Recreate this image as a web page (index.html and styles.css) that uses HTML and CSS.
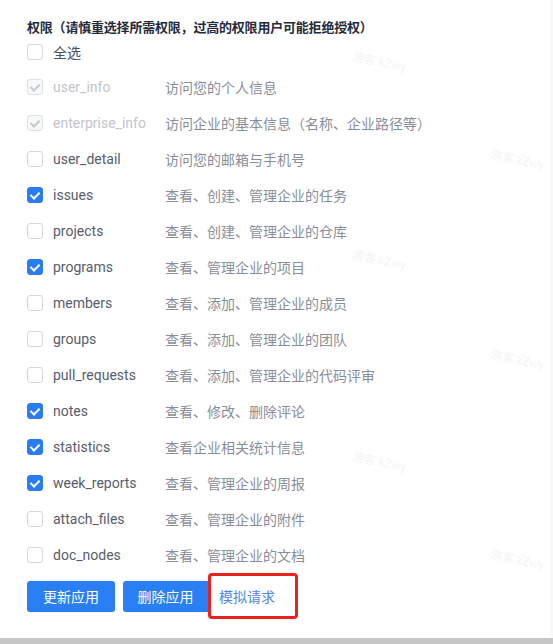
FILE: index.html
```html
<!DOCTYPE html>
<html lang="zh-CN">
<head>
    <meta charset="UTF-8">
    <meta name="viewport" content="width=device-width, initial-scale=1.0">
    <title>应用权限</title>
    <link rel="stylesheet" href="styles.css">
</head>
<body>
    <div class="page">
        <div class="scope-form">
            <div class="scope-title">权限（请慎重选择所需权限，过高的权限用户可能拒绝授权）</div>

            <label class="check-all">
                <span class="box"></span>
                <span class="name">全选</span>
            </label>

            <ul class="scope-list">
                <li class="scope disabled checked"><span class="box"></span><span class="name">user_info</span><span class="desc">访问您的个人信息</span></li>
                <li class="scope disabled checked"><span class="box"></span><span class="name">enterprise_info</span><span class="desc">访问企业的基本信息（名称、企业路径等）</span></li>
                <li class="scope"><span class="box"></span><span class="name">user_detail</span><span class="desc">访问您的邮箱与手机号</span></li>
                <li class="scope checked"><span class="box"></span><span class="name">issues</span><span class="desc">查看、创建、管理企业的任务</span></li>
                <li class="scope"><span class="box"></span><span class="name">projects</span><span class="desc">查看、创建、管理企业的仓库</span></li>
                <li class="scope checked"><span class="box"></span><span class="name">programs</span><span class="desc">查看、管理企业的项目</span></li>
                <li class="scope"><span class="box"></span><span class="name">members</span><span class="desc">查看、添加、管理企业的成员</span></li>
                <li class="scope"><span class="box"></span><span class="name">groups</span><span class="desc">查看、添加、管理企业的团队</span></li>
                <li class="scope"><span class="box"></span><span class="name">pull_requests</span><span class="desc">查看、添加、管理企业的代码评审</span></li>
                <li class="scope checked"><span class="box"></span><span class="name">notes</span><span class="desc">查看、修改、删除评论</span></li>
                <li class="scope checked"><span class="box"></span><span class="name">statistics</span><span class="desc">查看企业相关统计信息</span></li>
                <li class="scope checked"><span class="box"></span><span class="name">week_reports</span><span class="desc">查看、管理企业的周报</span></li>
                <li class="scope"><span class="box"></span><span class="name">attach_files</span><span class="desc">查看、管理企业的附件</span></li>
                <li class="scope"><span class="box"></span><span class="name">doc_nodes</span><span class="desc">查看、管理企业的文档</span></li>
            </ul>

            <div class="actions">
                <button class="btn btn-primary">更新应用</button>
                <button class="btn btn-primary btn-short">删除应用</button>
                <span class="marked"><button class="btn btn-text">模拟请求</button></span>
            </div>
        </div>

        <!-- faint watermark -->
        <div class="wm" style="left: 352px; top: 52px;">游客 kZwy</div>
        <div class="wm" style="left: 490px; top: 150px;">游客 kZwy</div>
        <div class="wm" style="left: 352px; top: 250px;">游客 kZwy</div>
        <div class="wm" style="left: 490px; top: 350px;">游客 kZwy</div>
        <div class="wm" style="left: 352px; top: 452px;">游客 kZwy</div>
        <div class="wm" style="left: 490px; top: 550px;">游客 kZwy</div>
    </div>
    <div class="bottom-bar"></div>
</body>
</html>
```

FILE: styles.css
```css
body {
    margin: 0;
    padding: 0;
    background: #fff;
    font-family: Roboto, "Noto Sans CJK SC", sans-serif;
    font-size: 14px;
    color: #575d6c;
}

.page {
    position: relative;
    height: 638px;
    overflow: hidden;
    border-right: 3px solid #f8f8f8;
}

.scope-form {
    padding: 18px 0 0 27px;
}

.scope-title {
    font-size: 13px;
    font-weight: bold;
    color: #252b3a;
    line-height: 20px;
    letter-spacing: -0.2px;
}

.check-all {
    display: flex;
    align-items: center;
    height: 28px;
}

.scope-list {
    list-style: none;
    margin: 3px 0 0;
    padding: 0;
}

.scope {
    display: flex;
    align-items: center;
    height: 36px;
}

.box {
    position: relative;
    flex: none;
    width: 14px;
    height: 14px;
    border: 1px solid #d3d6dc;
    border-radius: 3px;
    background: #fff;
    margin-right: 10px;
}

.scope.checked .box {
    background: #2a7cf5;
    border-color: #2a7cf5;
}

.scope.checked .box::after {
    content: "";
    position: absolute;
    left: 4px;
    top: 2px;
    width: 4px;
    height: 7px;
    border-right: 2px solid #fff;
    border-bottom: 2px solid #fff;
    transform: rotate(45deg);
}

.scope.disabled .box {
    background: #f7f8fa;
    border-color: #dfe1e6;
}

.scope.disabled .box::after {
    border-color: #c4c7ce;
}

.name {
    width: 112px;
    flex: none;
    color: #575d6c;
}

.check-all .name {
    color: #4a505e;
}

.scope.disabled .name {
    color: #c2c5cc;
}

.desc {
    color: #8a8e99;
}

.actions {
    display: flex;
    align-items: center;
}

.btn {
    font-family: "Noto Sans CJK SC", sans-serif;
    font-size: 14px;
    border: none;
    border-radius: 3px;
    cursor: pointer;
}

.btn-primary {
    height: 31px;
    width: 88px;
    padding: 0;
    background: #2b7ff5;
    color: #fff;
    margin-right: 8px;
}

.btn-short {
    width: 85px;
    margin-right: 0;
    border-radius: 3px 0 0 3px;
}

.marked {
    display: inline-block;
    border: 3px solid #e8231f;
    border-radius: 4px;
    background: #fff;
}

.btn-text {
    height: 40px;
    width: 84px;
    padding: 0 0 0 8px;
    text-align: left;
    background: #fff;
    color: #4d86ea;
}

.wm {
    position: absolute;
    color: #f5f5f5;
    font-size: 12px;
    transform: rotate(12deg);
    white-space: nowrap;
}

.bottom-bar {
    height: 6px;
    background: #c6c6c6;
}
```
